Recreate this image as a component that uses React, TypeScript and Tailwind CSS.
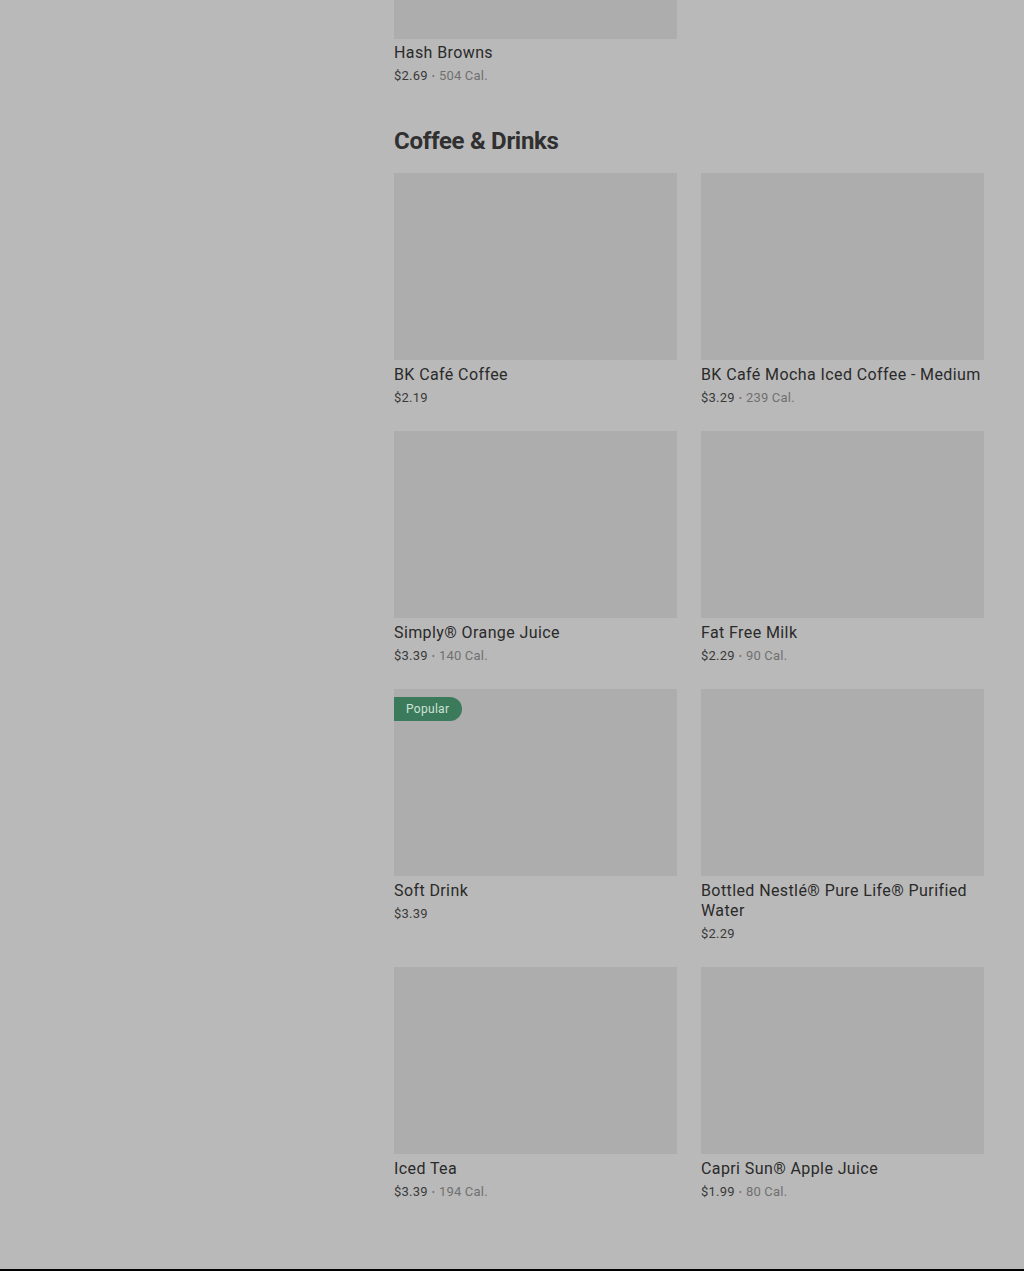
type Item = { name: string; price: string; cal?: string; popular?: boolean };

const drinks: Item[] = [
  { name: "BK Café Coffee", price: "$2.19" },
  { name: "BK Café Mocha Iced Coffee - Medium", price: "$3.29", cal: "239 Cal." },
  { name: "Simply® Orange Juice", price: "$3.39", cal: "140 Cal." },
  { name: "Fat Free Milk", price: "$2.29", cal: "90 Cal." },
  { name: "Soft Drink", price: "$3.39", popular: true },
  { name: "Bottled Nestlé® Pure Life® Purified Water", price: "$2.29" },
  { name: "Iced Tea", price: "$3.39", cal: "194 Cal." },
  { name: "Capri Sun® Apple Juice", price: "$1.99", cal: "80 Cal." },
];

function Price({ price, cal }: { price: string; cal?: string }) {
  return (
    <div className="mt-[3px] h-[20px] text-[13px] leading-[20px] tracking-[0.2px] text-[#3a3a3a]">
      {price}
      {cal && (
        <span className="text-[#707070]">
          <span className="mx-[4px] text-[9px] leading-none align-middle">•</span>
          {cal}
        </span>
      )}
    </div>
  );
}

function Card({ item }: { item: Item }) {
  return (
    <div className="flex flex-col">
      <div className="relative h-[187px] bg-[#adadad]">
        {item.popular && (
          <span className="absolute left-0 top-[8px] h-[24px] pl-[12px] pr-[13px] rounded-r-full bg-[#3b7b5c] text-[12px] leading-[24px] tracking-[0.3px] text-[#cfe2d6]">
            Popular
          </span>
        )}
      </div>
      <div className="mt-[5px] text-[16px] leading-[20px] tracking-[0.4px] text-[#2a2a2a]">
        {item.name}
      </div>
      <Price price={item.price} cal={item.cal} />
    </div>
  );
}

export default function App() {
  return (
    <div
      className="w-full min-h-screen bg-[#b9b9b9] flex flex-col"
      style={{ fontFamily: "Roboto, 'Noto Sans', sans-serif" }}
    >
      <div className="flex">
        <div className="w-[394px] shrink-0" />
        <div className="w-[590px] flex flex-col">
          <div className="w-[283px] flex flex-col">
            <div className="h-[39px] bg-[#adadad]" />
            <div className="mt-[4px] text-[16px] leading-[20px] tracking-[0.4px] text-[#2a2a2a]">
              Hash Browns
            </div>
            <Price price="$2.69" cal="504 Cal." />
          </div>

          <h2 className="mt-[39px] text-[24px] leading-[32px] font-bold tracking-[-0.3px] text-[#303030]">
            Coffee &amp; Drinks
          </h2>

          <div className="mt-[16px] grid grid-cols-2 gap-x-[24px] gap-y-[23px]">
            {drinks.map((d) => (
              <Card key={d.name} item={d} />
            ))}
          </div>
        </div>
      </div>
      <div className="mt-[67px] h-[40px] bg-black" />
    </div>
  );
}
